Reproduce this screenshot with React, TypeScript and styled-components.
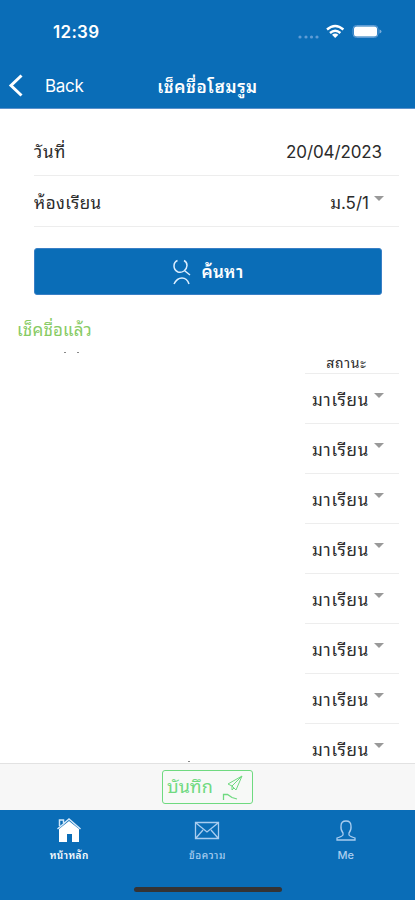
import React from "react";
import styled, { createGlobalStyle } from "styled-components";

const Global = createGlobalStyle`
  * { box-sizing: border-box; }
  body { margin: 0; background: #fff; }
`;

const BLUE = "#0a6db7";
const GREEN = "#6fda80";

const Screen = styled.div`
  width: 415px;
  height: 900px;
  display: flex;
  flex-direction: column;
  overflow: hidden;
  background: #fff;
  color: #2b2b2b;
  font-family: Inter, "Noto Sans Thai Looped", Loma, Garuda, Waree, "Noto Sans", "Liberation Sans", sans-serif;
`;

const Label = styled.span<{ $size: number; $weight?: number; $spacing?: number }>`
  font-size: ${(p) => p.$size}px;
  font-weight: ${(p) => p.$weight ?? 400};
  letter-spacing: ${(p) => p.$spacing ?? 0}px;
  line-height: 24px;
  white-space: nowrap;
`;

const Header = styled.header`
  flex: none;
  height: 109px;
  background: ${BLUE};
  border-bottom: 1px solid #5b91cb;
  color: #fff;
`;

const StatusBar = styled.div`
  height: 64px;
  padding: 0 32px 0 53px;
  display: flex;
  align-items: center;
  justify-content: space-between;
`;

const StatusIcons = styled.div`
  display: flex;
  align-items: center;
`;

const NavBar = styled.div`
  height: 44px;
  display: grid;
  grid-template-columns: 130px 155px 130px;
  align-items: center;
`;

const BackButton = styled.button`
  padding: 0 0 0 8px;
  display: flex;
  align-items: center;
  gap: 21px;
  border: 0;
  background: none;
  color: inherit;
  font-family: inherit;
`;

const Title = styled.h1`
  margin: 2px 0 0;
  display: flex;
  justify-content: center;
`;

const Content = styled.main`
  flex: 1;
  min-height: 0;
  display: flex;
  flex-direction: column;
  overflow: hidden;
`;

const Form = styled.section`
  flex: none;
  padding: 16px 16px 0 34px;
`;

const Field = styled.div`
  height: 51px;
  padding: 3px 17px 0 0;
  display: flex;
  align-items: center;
  justify-content: space-between;
  border-bottom: 1px solid #ededed;
`;

const SelectValue = styled.div`
  display: flex;
  align-items: center;
  gap: 5px;
  margin-right: -2px;
`;

const Caret = styled.i`
  width: 0;
  height: 0;
  margin-bottom: 9px;
  border-left: 5px solid transparent;
  border-right: 5px solid transparent;
  border-top: 5px solid #999;
`;

const SearchButton = styled.button`
  margin: 21px 0 0;
  width: 348px;
  height: 47px;
  display: flex;
  align-items: center;
  justify-content: center;
  gap: 9px;
  border: 1px solid #397fc5;
  border-radius: 3px;
  background: ${BLUE};
  color: #fff;
  font-family: inherit;
`;

const Checked = styled.div`
  flex: none;
  height: 24px;
  margin: 23px 0 0 17px;
  color: #87cb64;
`;

const Specks = styled.div`
  flex: none;
  height: 12px;
  padding: 10px 0 0 64px;
  display: flex;
  gap: 11px;
`;

const Speck = styled.i`
  width: 2px;
  height: 1px;
  background: #888;
`;

const ListArea = styled.section`
  flex: 1;
  min-height: 0;
  margin-top: -2px;
  display: grid;
  grid-template-columns: 305px 94px;
`;

const NameColumn = styled.div`
  height: 411px;
  padding: 0 0 1px 188px;
  display: flex;
  align-items: flex-end;
`;

const StatusColumn = styled.div`
  min-width: 0;
`;

const ColumnHead = styled.div`
  height: 22px;
  display: flex;
  justify-content: center;
  align-items: center;
  padding-right: 11px;
  border-bottom: 1px solid #ededed;
`;

const StatusRow = styled.div`
  height: 50px;
  padding: 3px 15px 0 7px;
  display: flex;
  align-items: center;
  justify-content: space-between;
  border-bottom: 1px solid #ededed;
`;

const Toolbar = styled.div`
  flex: none;
  height: 47px;
  display: flex;
  align-items: center;
  justify-content: center;
  border-top: 1px solid #e2e2e2;
  background: #f7f7f7;
`;

const SaveButton = styled.button`
  width: 91px;
  height: 34px;
  padding: 0 8px 0 4px;
  display: flex;
  align-items: center;
  justify-content: space-between;
  border: 1px solid ${GREEN};
  border-radius: 3px;
  background: #f7f9f7;
  color: ${GREEN};
  font-family: inherit;
`;

const Tabs = styled.nav`
  flex: none;
  height: 77px;
  padding-top: 7px;
  display: grid;
  grid-template-columns: repeat(3, 1fr);
  background: ${BLUE};
`;

const Tab = styled.div<{ $active?: boolean }>`
  display: flex;
  flex-direction: column;
  align-items: center;
  color: ${(p) => (p.$active ? "#fff" : "#a9cdf0")};
`;

const HomeArea = styled.div`
  flex: none;
  height: 13px;
  display: flex;
  justify-content: center;
  background: ${BLUE};
`;

const HomeBar = styled.div`
  width: 148px;
  height: 5px;
  border-radius: 3px;
  background: #353334;
`;

const rows = Array.from({ length: 8 }, (_, i) => i);

export default function App() {
  return (
    <Screen>
      <Global />
      <Header>
        <StatusBar>
          <Label $size={17} $weight={600} $spacing={0.3}>12:39</Label>
          <StatusIcons>
            <svg width="88" height="20" viewBox="0 0 88 20">
              <g fill="#5f9cd5">
                <circle cx="5" cy="15" r="1.6" /><circle cx="11" cy="15" r="1.6" />
                <circle cx="16.500" cy="15" r="1.6" /><circle cx="22" cy="15" r="1.6" />
              </g>
              <g fill="none" stroke="#fff" strokeWidth="2.400">
                <path d="M32 7.500Q40.200.5 48.400 7.500M35 11Q40.200 6.500 45.400 11" />
              </g>
              <path d="M37 12.800Q40.200 10.200 43.400 12.800L40.200 16Z" fill="#fff" />
              <rect x="58" y="3.500" width="25" height="12" rx="3.500" fill="none" stroke="#5f9cd5" />
              <rect x="59" y="4.500" width="23" height="10" rx="2.500" fill="#fff" />
              <path d="M84.500 7.500v4q2-.5 2-2t-2-2" fill="#79acdb" />
            </svg>
          </StatusIcons>
        </StatusBar>
        <NavBar>
          <BackButton>
            <svg width="16" height="24" viewBox="0 0 16 24" fill="none" stroke="#fff" strokeWidth="3">
              <path d="M13.500 1.500L3 11.500l10.500 10" />
            </svg>
            <Label $size={17} $spacing={-0.3}>Back</Label>
          </BackButton>
          <Title><Label $size={17} $weight={600} $spacing={0.6}>เช็คชื่อโฮมรูม</Label></Title>
        </NavBar>
      </Header>
      <Content>
        <Form>
          <Field>
            <Label $size={17} $spacing={0.7}>วันที่</Label>
            <Label $size={17} $spacing={-0.1}>20/04/2023</Label>
          </Field>
          <Field>
            <Label $size={17} $spacing={0.45}>ห้องเรียน</Label>
            <SelectValue><Label $size={17}>ม.5/1</Label><Caret /></SelectValue>
          </Field>
          <SearchButton>
            <svg width="20" height="26" viewBox="0 0 20 26" fill="none" stroke="#dceeff" strokeWidth="1.500">
              <path d="M5.500 1.500Q2 3 2 7t4 6q3 1 6-1 3-2.500 3-5.500 0-3.500-3-5M13 12l5 4M2 25q3-6 8-6t7 6" />
            </svg>
            <Label $size={17} $weight={600} $spacing={0.3}>ค้นหา</Label>
          </SearchButton>
        </Form>
        <Checked><Label $size={17} $spacing={0.15}>เช็คชื่อแล้ว</Label></Checked>
        <Specks><Speck /><Speck /></Specks>
        <ListArea>
          <NameColumn><Speck /></NameColumn>
          <StatusColumn>
            <ColumnHead><Label $size={14} $spacing={0.8}>สถานะ</Label></ColumnHead>
            {rows.map((row) => (
              <StatusRow key={row}><Label $size={17} $spacing={0.8}>มาเรียน</Label><Caret /></StatusRow>
            ))}
          </StatusColumn>
        </ListArea>
      </Content>
      <Toolbar>
        <SaveButton>
          <Label $size={18}>บันทึก</Label>
          <svg width="22" height="28" viewBox="0 0 22 28" fill="none" stroke={GREEN} strokeWidth="1">
            <path d="M20 3L6 11l4 2 4 4L20 3ZM20 3L10 13v4l2-2" />
            <path d="M1.500 27v-5.500h4L10 24.500l5 1.500" strokeWidth="1.300" />
          </svg>
        </SaveButton>
      </Toolbar>
      <Tabs>
        <Tab $active>
          <svg width="26" height="26" viewBox="0 0 26 26">
            <path d="M3 12L13 4l10 8v13h-7v-8h-5v8H3Z" fill="#fff" />
            <path d="M1.500 12L13 2l11.500 10M3.500 9V3h4v3" fill="none" stroke="#d4e8fa" strokeWidth="1.500" />
          </svg>
          <Label $size={10} $weight={600} $spacing={0.4}>หน้าหลัก</Label>
        </Tab>
        <Tab>
          <svg width="26" height="26" viewBox="0 0 26 26" fill="none" stroke="currentColor" strokeWidth="1.300">
            <path d="M1.500 5.500h23v16h-23ZM2 6l11 9L24 6M2 21l7-8M24 21l-7-8" />
          </svg>
          <Label $size={10} $weight={500} $spacing={0.6}>ข้อความ</Label>
        </Tab>
        <Tab>
          <svg width="26" height="26" viewBox="0 0 26 26" fill="none" stroke="currentColor" strokeWidth="1.300">
            <path d="M10 16Q7.500 13 8 9q0-5 5-5t5 5q.5 4-2 7v2q1 1.500 6 3v2H4v-2q5-1.500 6-3Z" />
          </svg>
          <Label $size={11} $weight={500}>Me</Label>
        </Tab>
      </Tabs>
      <HomeArea><HomeBar /></HomeArea>
    </Screen>
  );
}
